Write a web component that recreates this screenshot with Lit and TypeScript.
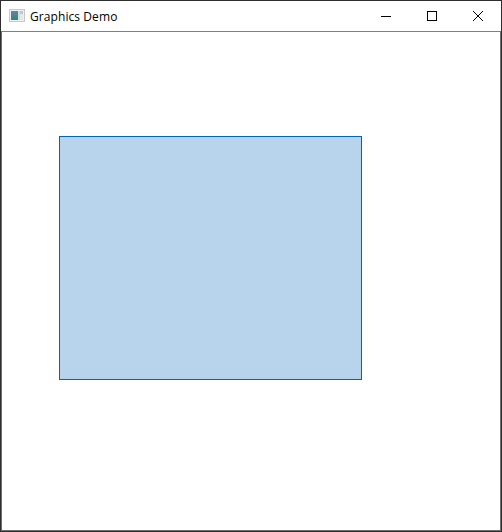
import { LitElement, html, css } from "lit";
import { customElement } from "lit/decorators.js";

@customElement("app-root")
export class AppRoot extends LitElement {
  static styles = css`
    :host { display: block; width: 502px; height: 532px; }
    .window { box-sizing: border-box; width: 502px; height: 532px; display: flex; flex-direction: column; background: #fff; border: 1px solid #2e2e2e; }
    .titlebar { flex: none; height: 30px; display: flex; align-items: center; background: #fff; padding-left: 8px; }
    .app-icon { flex: none; width: 16px; height: 16px; display: block; }
    .title { flex: 1; margin-left: 5px; font: 12px "Open Sans", "Noto Sans", sans-serif; letter-spacing: 0.08px; color: #000; white-space: nowrap; }
    .controls { flex: none; display: flex; }
    .control { width: 46px; height: 30px; display: flex; align-items: center; justify-content: center; }
    .control svg { display: block; width: 10px; height: 10px; }
    .client { flex: 1; min-height: 0; border: 1px solid #6f6f6f; border-top-color: #7f7f85; padding: 104px 0 0 57px; }
    .rect { box-sizing: border-box; width: 303px; height: 244px; background: #b7d4ec; border: 1px solid #0066b4; }
  `;

  render() {
    return html`
      <div class="window">
        <div class="titlebar">
          <svg class="app-icon" viewBox="0 0 16 16">
            <defs>
              <linearGradient id="pane" x1="0" y1="0" x2="0" y2="1">
                <stop offset="0" stop-color="#5f86a2"/>
                <stop offset="1" stop-color="#35827a"/>
              </linearGradient>
            </defs>
            <rect x="0.5" y="1.5" width="15" height="12" fill="#f0f0f0" stroke="#c8c8c8"/>
            <rect x="2" y="3" width="7" height="9" fill="url(#pane)"/>
            <rect x="9" y="3" width="2" height="9" fill="#cfe3d8"/>
            <rect x="11" y="3" width="3" height="3" fill="#b9c9d6"/>
            <rect x="11" y="6" width="3" height="6" fill="#e4e8ea"/>
          </svg>
          <span class="title">Graphics Demo</span>
          <div class="controls">
            <div class="control"><svg viewBox="0 0 10 10"><path d="M0 5.5H10" stroke="#000" fill="none"/></svg></div>
            <div class="control"><svg viewBox="0 0 10 10"><rect x="0.5" y="0.5" width="9" height="9" stroke="#000" fill="none"/></svg></div>
            <div class="control"><svg viewBox="0 0 10 10"><path d="M0 0L10 10M10 0L0 10" stroke="#000" fill="none"/></svg></div>
          </div>
        </div>
        <div class="client"><div class="rect"></div></div>
      </div>
    `;
  }
}
